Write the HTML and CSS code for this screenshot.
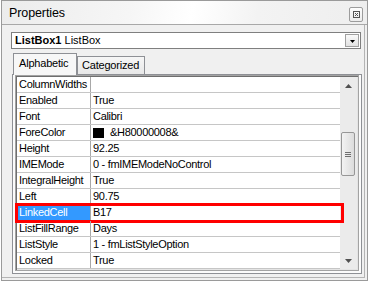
FILE: index.html
```html
<!DOCTYPE html>
<html lang="en">
<head>
    <meta charset="UTF-8">
    <meta name="viewport" content="width=device-width, initial-scale=1.0">
    <title>Properties</title>
    <link rel="stylesheet" href="styles.css">
</head>
<body>
    <div class="window">
        <div class="titlebar">
            <span class="title">Properties</span>
            <div class="close">
                <svg width="7" height="7" viewBox="0 0 7 7">
                    <rect x="0.5" y="0.5" width="6" height="6" fill="none" stroke="#555" stroke-width="1"/>
                    <path d="M2 2 L5 5 M5 2 L2 5" stroke="#555" stroke-width="1"/>
                </svg>
            </div>
        </div>
        <div class="body">
            <div class="combo">
                <span class="combo-text"><b>ListBox1</b> ListBox</span>
                <span class="drop">
                    <svg width="5" height="3" viewBox="0 0 5 3"><polygon points="0,0 5,0 2.5,3" fill="#000"/></svg>
                </span>
            </div>
            <div class="tabs">
                <div class="tab active">Alphabetic</div>
                <div class="tab">Categorized</div>
            </div>
            <div class="page">
                <div class="grid">
                    <div class="rows">
                        <div class="row"><div class="name">ColumnWidths</div><div class="value"></div></div>
                        <div class="row"><div class="name">Enabled</div><div class="value">True</div></div>
                        <div class="row"><div class="name">Font</div><div class="value">Calibri</div></div>
                        <div class="row"><div class="name">ForeColor</div><div class="value"><span class="swatch"></span>&amp;H80000008&amp;</div></div>
                        <div class="row"><div class="name">Height</div><div class="value">92.25</div></div>
                        <div class="row"><div class="name">IMEMode</div><div class="value">0 - fmIMEModeNoControl</div></div>
                        <div class="row"><div class="name">IntegralHeight</div><div class="value">True</div></div>
                        <div class="row"><div class="name">Left</div><div class="value">90.75</div></div>
                        <div class="row marked"><div class="name selected">LinkedCell</div><div class="value">B17</div><div class="mark"></div></div>
                        <div class="row"><div class="name">ListFillRange</div><div class="value">Days</div></div>
                        <div class="row"><div class="name">ListStyle</div><div class="value">1 - fmListStyleOption</div></div>
                        <div class="row"><div class="name">Locked</div><div class="value">True</div></div>
                    </div>
                    <div class="scrollbar">
                        <div class="arrow">
                            <svg width="7" height="4" viewBox="0 0 7 4"><polygon points="0,4 7,4 3.5,0" fill="#505050"/></svg>
                        </div>
                        <div class="track">
                            <div class="thumb"><span></span><span></span><span></span></div>
                        </div>
                        <div class="arrow">
                            <svg width="7" height="4" viewBox="0 0 7 4"><polygon points="0,0 7,0 3.5,4" fill="#505050"/></svg>
                        </div>
                    </div>
                </div>
            </div>
        </div>
    </div>
</body>
</html>
```

FILE: styles.css
```css
body {
    margin: 0;
    background-color: white;
    font-family: "Liberation Sans", Arial, sans-serif;
    font-size: 11px;
    color: black;
}
.window {
    box-sizing: border-box;
    margin-left: 1px;
    width: 367px;
    height: 281px;
    border: 1px solid #9a9a9a;
    background-color: #f0f0f0;
    display: flex;
    flex-direction: column;
}
.titlebar {
    height: 23px;
    border-bottom: 1px solid #a8a8a8;
    background: linear-gradient(100deg, #ececec 0%, #f6f6f6 35%, #ffffff 52%, #f3f3f3 70%, #eeeeee 100%);
    display: flex;
    justify-content: space-between;
}
.title {
    font-size: 12.5px;
    line-height: 23px;
    padding-left: 7px;
    padding-top: 1px;
    letter-spacing: -0.1px;
}
.close {
    box-sizing: border-box;
    width: 14px;
    height: 15px;
    margin-top: 6px;
    margin-right: 4px;
    border: 1px solid #9c9c9c;
    border-radius: 2px;
    background: linear-gradient(#fdfdfd, #ececec);
    display: flex;
    align-items: center;
    justify-content: center;
}
.body {
    flex: 1;
    margin: 0 2px 2px 0;
    border-right: 1px solid #b4b4b4;
    border-bottom: 1px solid #b4b4b4;
    padding: 7px 2px 3px 9px;
}
.combo {
    box-sizing: border-box;
    width: 350px;
    height: 17px;
    border: 1px solid #7f7f7f;
    background-color: white;
    display: flex;
    align-items: center;
    justify-content: space-between;
}
.combo-text {
    padding-left: 3px;
    line-height: 15px;
}
.drop {
    box-sizing: border-box;
    width: 14px;
    height: 13px;
    margin-right: 1px;
    border: 1px solid #a0a0a0;
    background: linear-gradient(#fafafa, #e2e2e2);
    display: flex;
    align-items: center;
    justify-content: center;
    padding-top: 2px;
}
.tabs {
    display: flex;
    align-items: flex-end;
    height: 21px;
    margin-top: 4px;
    padding-left: 2px;
}
.tab {
    box-sizing: border-box;
    height: 18px;
    border: 1px solid #8e9095;
    border-bottom: none;
    background: linear-gradient(#f6f6f6, #e8e8e8);
    padding: 0 5px 0 4px;
    line-height: 17px;
    letter-spacing: -0.2px;
}
.tab.active {
    height: 22px;
    width: 64px;
    margin-bottom: -1px;
    padding-left: 5px;
    background: #f7f7f7;
    line-height: 18px;
    position: relative;
}
.page {
    box-sizing: border-box;
    margin-left: 1px;
    width: 350px;
    border: 1px solid #8e9095;
    background-color: #fbfbfb;
    padding: 0 2px 2px 2px;
}
.grid {
    display: flex;
    border: 1px solid #a3a3a3;
    padding: 1px;
    box-shadow: inset 1px 1px 0 #6e6e6e, inset -1px -1px 0 #e4e4e4;
    background-color: white;
}
.rows {
    width: 323px;
}
.row {
    box-sizing: border-box;
    height: 16px;
    display: flex;
    border-bottom: 1px solid #c6c6c6;
    line-height: 15px;
    letter-spacing: -0.3px;
    white-space: nowrap;
    position: relative;
}
.name {
    box-sizing: border-box;
    width: 74px;
    flex: none;
    border-right: 1px solid #a8a8a8;
    padding-left: 2px;
    overflow: hidden;
}
.name.selected {
    background-color: #3399ff;
    color: white;
}
.value {
    padding-left: 2px;
    display: flex;
    align-items: center;
}
.swatch {
    display: inline-block;
    width: 11px;
    height: 10px;
    background-color: black;
    margin-right: 6px;
}
.mark {
    position: absolute;
    top: -2px;
    left: -2px;
    right: -4px;
    bottom: -3px;
    border: 3px solid #ff0000;
}
.scrollbar {
    width: 17px;
    height: 192px;
    background-color: #ebebeb;
    display: flex;
    flex-direction: column;
}
.arrow {
    height: 17px;
    display: flex;
    align-items: center;
    justify-content: center;
}
.track {
    flex: 1;
    padding-top: 38px;
}
.thumb {
    box-sizing: border-box;
    width: 14px;
    height: 44px;
    margin-left: 1px;
    border: 1px solid #979797;
    border-radius: 2px;
    background: linear-gradient(90deg, #f3f3f3, #dcdcdc);
    display: flex;
    flex-direction: column;
    align-items: center;
    justify-content: center;
    gap: 1px;
}
.thumb span {
    width: 6px;
    height: 1px;
    background-color: #6f6f6f;
}
```
